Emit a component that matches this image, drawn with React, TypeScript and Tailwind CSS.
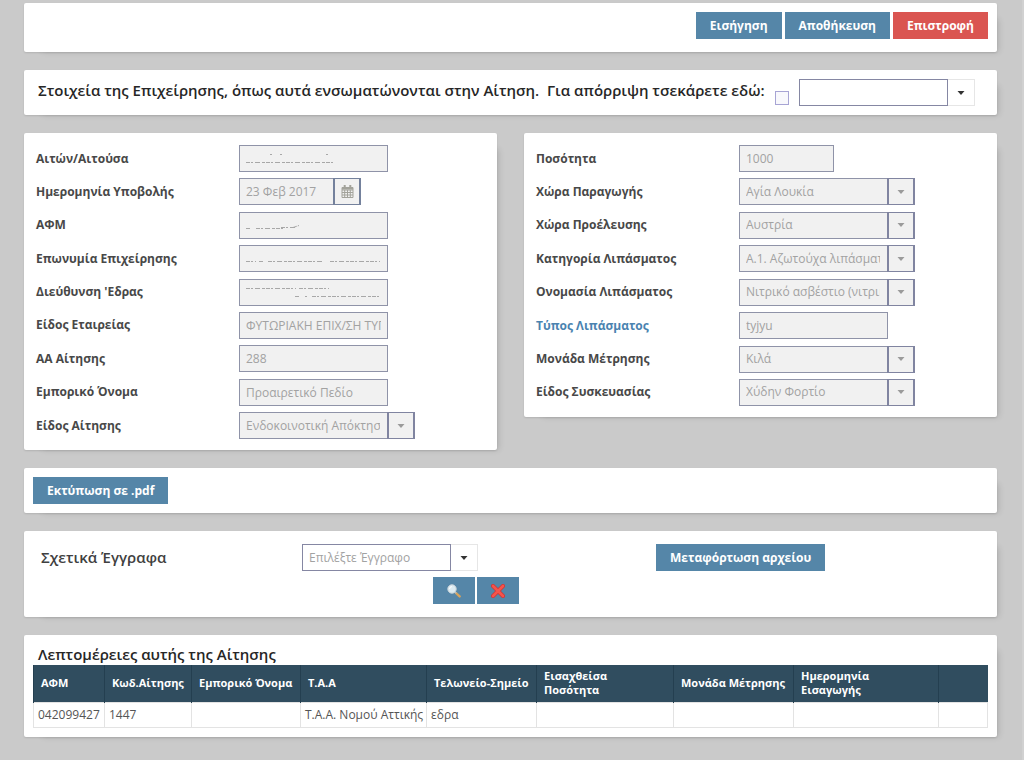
import React, { useId } from 'react';

const card = 'rounded-[2px] bg-white shadow-[0_1px_2px_rgba(0,0,0,0.12),10px_8px_6px_-8px_rgba(0,0,0,0.12)]';

function Button({ children, danger = false, label }: { children: React.ReactNode; danger?: boolean; label?: string }) {
  return (
    <button
      type="button"
      aria-label={label}
      className={`flex h-[27px] items-center justify-center px-3.5 text-xs font-bold text-white ${danger ? 'bg-[#da5551]' : 'bg-[#5586a8]'}`}
    >
      {children}
    </button>
  );
}

function Caret() {
  return (
    <svg viewBox="0 0 8 4" className="h-1 w-2 fill-current" aria-hidden="true">
      <path d="M0.5 0h7L4 4z" />
    </svg>
  );
}

function Dropdown({ id, value, disabled = false, label, placeholder = false }: { id?: string; value: string; disabled?: boolean; label?: string; placeholder?: boolean }) {
  return (
    <div className="relative w-44 text-xs">
      <select
        id={id}
        aria-label={label}
        disabled={disabled}
        className={`block h-[27px] w-full appearance-none rounded-none border pr-[34px] pl-1.5 opacity-100 ${
          disabled ? 'border-[#8f93a8] bg-[#f1f1f1] text-[#a2a2a2]' : 'border-[#e6e6e6] bg-white'
        } ${placeholder ? 'text-[#a2a2a2]' : ''}`}
      >
        <option>{value}</option>
      </select>
      {!disabled && <span className="pointer-events-none absolute inset-y-0 left-0 w-[149px] border border-[#8587a3]" />}
      <span
        className={`pointer-events-none absolute inset-y-0 right-0 flex w-7 items-center justify-center ${
          disabled ? 'border-y border-r-2 border-l-2 border-[#8084a0] bg-[#f1f1f1] text-[#9b9b9b]' : 'text-[#333]'
        }`}
      >
        <Caret />
      </span>
    </div>
  );
}

const smudges: Record<string, string[]> = {
  applicant: ['M7 17.5h88', 'M31 9.5h2M41 9.5h2M87 9.5h2'],
  afm: ['M7 16.5h5M17 16.5h28', 'M42 15.5h14M54 15.5l6-2'],
  company: ['M7 16.5h10M20 16.5h4M29 16.5h56M91 16.5h50'],
  address: ['M7 9.5h50M60 9.5h30', 'M56 17.5h5M66 17.5h2M73 17.5h68'],
};

function Smudge({ name }: { name: string }) {
  return (
    <svg viewBox="0 0 149 27" className="pointer-events-none absolute inset-0 h-[27px] w-[149px] fill-none stroke-[#a8a8a8]" aria-hidden="true">
      {smudges[name].map((d) => (
        <path key={d} d={d} strokeDasharray="4 1 2 2 5 2 3 1" />
      ))}
    </svg>
  );
}

type FieldSpec = { label: string; value?: string; kind?: 'text' | 'short' | 'date' | 'select'; smudge?: string; accent?: boolean };

const inputStyle = 'block h-[27px] rounded-none border border-[#8f93a8] bg-[#f1f1f1] px-1.5 text-xs text-[#a2a2a2]';

function Field({ label, value = '', kind = 'text', smudge, accent }: FieldSpec) {
  const id = useId();
  return (
    <div className="flex items-center">
      <label htmlFor={id} className={`w-[203px] shrink-0 text-xs font-bold ${accent ? 'text-[#4a83b0]' : 'text-[#484848]'}`}>
        {label}
      </label>
      {kind === 'select' && <Dropdown id={id} value={value} disabled />}
      {kind === 'date' && (
        <div className="flex">
          <input id={id} disabled defaultValue={value} className={`${inputStyle} w-[95px]`} />
          <button type="button" disabled aria-label="Ημερολόγιο" className="-ml-px flex h-[27px] w-7 items-center justify-center border-x-2 border-y border-[#74819c] bg-[#f1f1f1] text-[#a3a39b]">
            <svg viewBox="0 0 13 13" className="size-[13px] fill-none stroke-current" aria-hidden="true">
              <path d="M1 2.5h11v10H1zM1 5h11M1 7.5h11M1 10h11M3.7 5v7.5M6.5 5v7.5M9.3 5v7.5" />
              <path d="M1 3.5h11" strokeWidth="2" />
              <path d="M3.7 0v3M9.3 0v3" strokeWidth="2" />
            </svg>
          </button>
        </div>
      )}
      {(kind === 'text' || kind === 'short') && (
        <div className="relative">
          <input id={id} disabled defaultValue={value} className={`${inputStyle} ${kind === 'short' ? 'w-[95px]' : 'w-[149px]'}`} />
          {smudge && <Smudge name={smudge} />}
        </div>
      )}
    </div>
  );
}

const business: FieldSpec[] = [
  { label: 'Αιτών/Αιτούσα', smudge: 'applicant' },
  { label: 'Ημερομηνία Υποβολής', value: '23 Φεβ 2017', kind: 'date' },
  { label: 'ΑΦΜ', smudge: 'afm' },
  { label: 'Επωνυμία Επιχείρησης', smudge: 'company' },
  { label: "Διεύθυνση 'Εδρας", smudge: 'address' },
  { label: 'Είδος Εταιρείας', value: 'ΦΥΤΩΡΙΑΚΗ ΕΠΙΧ/ΣΗ ΤΥΠΟΥ' },
  { label: 'ΑΑ Αίτησης', value: '288' },
  { label: 'Εμπορικό Όνομα', value: 'Προαιρετικό Πεδίο' },
  { label: 'Είδος Αίτησης', value: 'Ενδοκοινοτική Απόκτηση', kind: 'select' },
];

const product: FieldSpec[] = [
  { label: 'Ποσότητα', value: '1000', kind: 'short' },
  { label: 'Χώρα Παραγωγής', value: 'Αγία Λουκία', kind: 'select' },
  { label: 'Χώρα Προέλευσης', value: 'Αυστρία', kind: 'select' },
  { label: 'Κατηγορία Λιπάσματος', value: 'Α.1. Αζωτούχα λιπάσματα', kind: 'select' },
  { label: 'Ονομασία Λιπάσματος', value: 'Νιτρικό ασβέστιο (νιτρικό', kind: 'select' },
  { label: 'Τύπος Λιπάσματος', value: 'tyjyu', accent: true },
  { label: 'Μονάδα Μέτρησης', value: 'Κιλά', kind: 'select' },
  { label: 'Είδος Συσκευασίας', value: 'Χύδην Φορτίο', kind: 'select' },
];

const columns: [string, string][] = [
  ['ΑΦΜ', 'w-[71px]'],
  ['Κωδ.Αίτησης', 'w-[87px]'],
  ['Εμπορικό Όνομα', 'w-[109px]'],
  ['Τ.Α.Α', 'w-[126px]'],
  ['Τελωνείο-Σημείο', 'w-[110px]'],
  ['Εισαχθείσα\nΠοσότητα', 'w-[137px]'],
  ['Μονάδα Μέτρησης', 'w-[120px]'],
  ['Ημερομηνία\nΕισαγωγής', 'w-[145px]'],
  ['', ''],
];

const row = ['042099427', '1447', '', 'Τ.Α.Α. Νομού Αττικής', 'εδρα', '', '', '', ''];

export default function App() {
  return (
    <main className="flex min-h-screen flex-col gap-[18px] border-r-2 border-[#d1d1d1] bg-[#cacaca] pt-[3px] pr-[25px] pb-6 pl-6 font-['Open_Sans','Noto_Sans',sans-serif]">
      <header className={`${card} flex justify-end gap-[3px] px-[9px] pt-[9px] pb-[13px]`}>
        <Button>Εισήγηση</Button>
        <Button>Αποθήκευση</Button>
        <Button danger>Επιστροφή</Button>
      </header>

      <section className={`${card} flex items-start py-[9px] pr-[22px] pl-3.5`}>
        <label htmlFor="reject" className="text-[15px] leading-[22px] font-semibold whitespace-pre text-[#262626]">
          {'Στοιχεία της Επιχείρησης, όπως αυτά ενσωματώνονται στην Αίτηση.  Για απόρριψη τσεκάρετε εδώ:'}
        </label>
        <input id="reject" type="checkbox" className="mt-3 ml-2.5 size-3.5 shrink-0 appearance-none border border-[#a7a4d4] bg-[#f8f8fc] checked:bg-[#5586a8]" />
        <div className="ml-auto">
          <Dropdown value="" label="Αιτιολογία απόρριψης" />
        </div>
      </section>

      <div className="grid grid-cols-2 items-start gap-[27px]">
        <section className={`${card} flex min-h-[317px] flex-col justify-between px-3 pt-3 pb-[11px]`}>
          {business.map((f) => (
            <Field key={f.label} {...f} />
          ))}
        </section>
        <section className={`${card} flex min-h-[284px] flex-col justify-between px-3 pt-3 pb-[11px]`}>
          {product.map((f) => (
            <Field key={f.label} {...f} />
          ))}
        </section>
      </div>

      <section className={`${card} flex p-[9px]`}>
        <Button>Εκτύπωση σε .pdf</Button>
      </section>

      <section className={`${card} flex items-start px-[17px] pt-[13px] pb-[13px]`}>
        <label htmlFor="document" className="w-[261px] shrink-0 text-[15px] leading-[26px] font-semibold text-[#404040]">
          Σχετικά Έγγραφα
        </label>
        <div className="flex w-[354px] shrink-0 flex-col gap-1.5">
          <Dropdown id="document" value="Επιλέξτε Έγγραφο" placeholder />
          <div className="ml-[131px] flex gap-0.5">
            <Button label="Προβολή">
              <svg viewBox="0 0 14 14" className="size-3.5" aria-hidden="true">
                <path d="M9 9l3.6 3.4" stroke="#d9a45c" strokeWidth="2.4" strokeLinecap="round" />
                <path d="M7.8 7.8l1.4 1.4" stroke="#b9c0c4" strokeWidth="1.6" />
                <circle cx="5" cy="5" r="4.2" fill="#dcebf2" stroke="#c9d3d8" />
                <path d="M2.6 5A2.4 2.4 0 0 1 5 2.6" fill="none" stroke="#fff" />
              </svg>
            </Button>
            <Button label="Διαγραφή">
              <svg viewBox="0 0 14 14" className="size-3.5" aria-hidden="true">
                <path d="M2 2l10 10M12 2L2 12" stroke="#d03434" strokeWidth="4" strokeLinecap="round" />
                <path d="M2 2l10 10M12 2L2 12" stroke="#f4544c" strokeWidth="2.6" strokeLinecap="round" />
              </svg>
            </Button>
          </div>
        </div>
        <Button>Μεταφόρτωση αρχείου</Button>
      </section>

      <section className={`${card} px-[9px] pt-2 pb-[9px]`}>
        <h2 className="pl-[5px] text-[15px] leading-[22px] font-semibold text-[#262626]">Λεπτομέρειες αυτής της Αίτησης</h2>
        <table className="w-full table-fixed border-collapse">
          <thead>
            <tr className="h-[37px] bg-[#304d5f]">
              {columns.map(([name, width], i) => (
                <th key={i} className={`${width} border-l border-[#243f50] px-[7px] text-left text-[11px] leading-[14px] font-bold whitespace-pre text-white`}>
                  {name}
                </th>
              ))}
            </tr>
          </thead>
          <tbody>
            <tr className="h-[25px]">
              {row.map((cell, i) => (
                <td key={i} className="border border-[#e3e3e3] px-1 text-xs leading-5 whitespace-nowrap text-[#555]">
                  {cell}
                </td>
              ))}
            </tr>
          </tbody>
        </table>
      </section>
    </main>
  );
}
